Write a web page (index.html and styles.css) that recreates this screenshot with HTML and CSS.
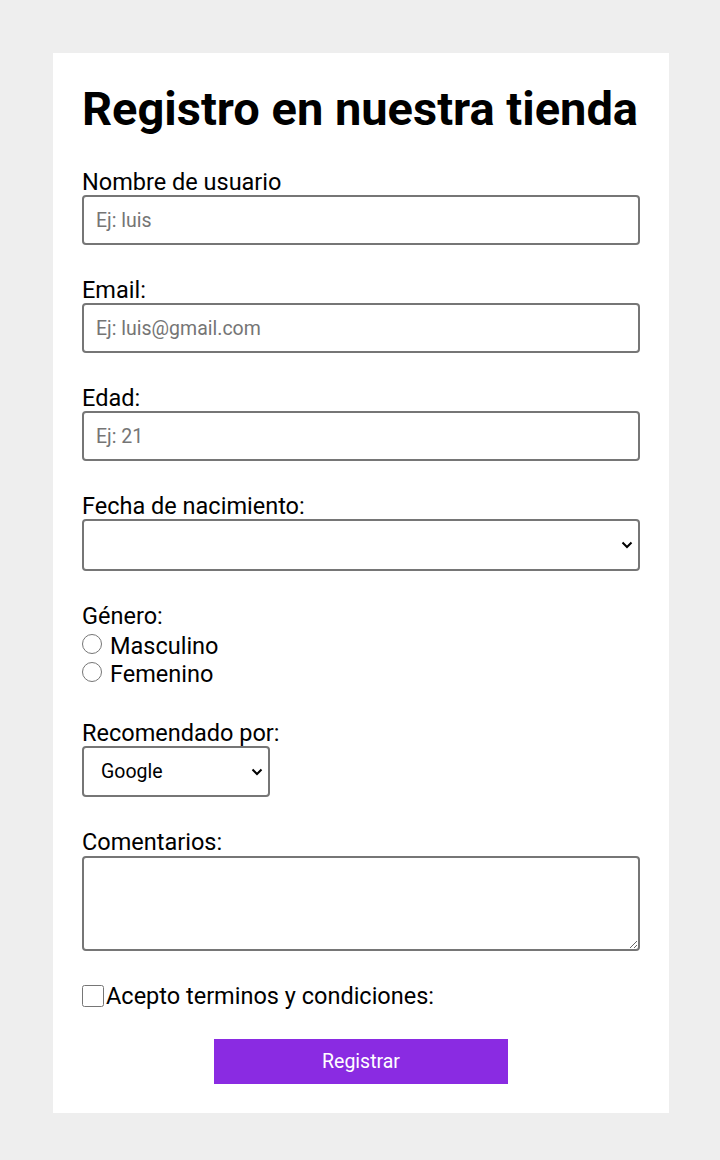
FILE: index.html
```html
<!DOCTYPE html>
<html lang="es">
<head>
<meta charset="utf-8">
<title>Registro</title>
<link rel="stylesheet" href="styles.css">
</head>
<body>
<form class="card">
  <h1 class="title">Registro en nuestra tienda</h1>
  <div class="field">
    <label class="label" for="user">Nombre de usuario</label>
    <input class="input" id="user" type="text" placeholder="Ej: luis">
  </div>
  <div class="field">
    <label class="label" for="email">Email:</label>
    <input class="input" id="email" type="email" placeholder="Ej: luis@gmail.com">
  </div>
  <div class="field">
    <label class="label" for="age">Edad:</label>
    <input class="input" id="age" type="text" placeholder="Ej: 21">
  </div>
  <div class="field">
    <label class="label" for="birth">Fecha de nacimiento:</label>
    <div class="select-wrap select-wide">
      <select class="select" id="birth"><option></option></select>
      <svg class="chevron" width="12" height="8" viewBox="0 0 12 8"><path d="M1.5 1.5 L6 6 L10.5 1.5" fill="none" stroke="#000" stroke-width="2"/></svg>
    </div>
  </div>
  <div class="field">
    <span class="label">Género:</span>
    <label class="radio-row radio-first"><input class="radio" type="radio" name="g">Masculino</label>
    <label class="radio-row"><input class="radio" type="radio" name="g">Femenino</label>
  </div>
  <div class="field">
    <label class="label" for="rec">Recomendado por:</label>
    <div class="select-wrap select-small">
      <select class="select" id="rec"><option>Google</option><option>Amigo</option></select>
      <svg class="chevron" width="12" height="8" viewBox="0 0 12 8"><path d="M1.5 1.5 L6 6 L10.5 1.5" fill="none" stroke="#000" stroke-width="2"/></svg>
    </div>
  </div>
  <div class="field">
    <label class="label label-com" for="com">Comentarios:</label>
    <textarea class="textarea" id="com"></textarea>
  </div>
  <label class="check-row"><input class="check" type="checkbox">Acepto terminos y condiciones:</label>
  <div class="actions">
    <button class="button" type="submit">Registrar</button>
  </div>
</form>
</body>
</html>
```
FILE: styles.css
```css
html, body {
  margin: 0;
  padding: 0;
}
body {
  background: #eeeeee;
  font-family: Roboto, "Liberation Sans", sans-serif;
  color: #000;
  padding: 53px 0 47px 53px;
}
.card {
  box-sizing: border-box;
  width: 616px;
  height: 1060px;
  background: #fff;
  padding: 28px 29px 30px 29px;
  display: flex;
  flex-direction: column;
}
.title {
  margin: 0 0 32px 0;
  font-size: 47px;
  font-weight: 700;
  line-height: 56px;
  white-space: nowrap;
}
.field {
  display: flex;
  flex-direction: column;
  margin-bottom: 32px;
}
.label {
  font-size: 23.5px;
  line-height: 26px;
}
.label-com {
  line-height: 27px;
}
.input, .select, .textarea {
  box-sizing: border-box;
  border: 2px solid #767676;
  border-radius: 4px;
  background: #fff;
  font-family: Roboto, "Liberation Sans", sans-serif;
  margin: 0;
}
.input {
  height: 50px;
  width: 100%;
  padding: 0 12px;
  font-size: 19.5px;
}
.input::placeholder {
  color: #757575;
}
.select-wrap {
  position: relative;
  display: flex;
}
.select {
  appearance: none;
  -webkit-appearance: none;
  width: 100%;
  height: 52px;
  font-size: 19.5px;
  color: #000;
  padding: 0 30px 0 17px;
}
.select-wide {
  width: 100%;
}
.select-small {
  width: 188px;
}
.select-small .select {
  height: 51px;
}
.chevron {
  position: absolute;
  right: 7px;
  top: 50%;
  margin-top: -4px;
  pointer-events: none;
}
.textarea {
  width: 100%;
  height: 95px;
  font-size: 18px;
}
.radio-row {
  display: block;
  font-size: 23.5px;
  line-height: 28px;
}
.radio {
  width: 20px;
  height: 20px;
  margin: 0 8px 2px 0;
  vertical-align: baseline;
}
.radio-first {
  margin-top: 3px;
}
.check-row {
  display: flex;
  align-items: center;
  font-size: 23.5px;
  line-height: 26px;
  margin-top: 0;
}
.check {
  width: 22px;
  height: 22px;
  margin: 0 2px 0 0;
}
.actions {
  display: flex;
  justify-content: center;
  margin-top: 30px;
}
.button {
  width: 294px;
  height: 45px;
  border: none;
  background: #8a2be2;
  color: #fff;
  font-family: Roboto, "Liberation Sans", sans-serif;
  font-size: 19.5px;
  border-radius: 0;
}
```
